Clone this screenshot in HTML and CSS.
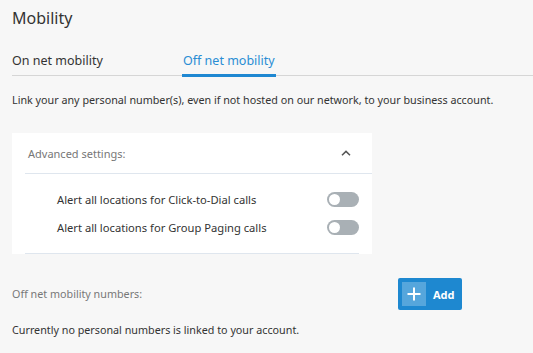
FILE: index.html
```html
<!DOCTYPE html>
<html lang="en">
<head>
    <meta charset="UTF-8">
    <meta name="viewport" content="width=device-width, initial-scale=1.0">
    <title>Mobility</title>
    <link rel="stylesheet" href="styles.css">
</head>
<body>
    <div class="page">
        <h1>Mobility</h1>

        <!-- Tabs -->
        <div class="tabs">
            <div class="tab">On net mobility</div>
            <div class="tab active">Off net mobility</div>
        </div>

        <p class="intro">Link your any personal number(s), even if not hosted on our network, to your business account.</p>

        <!-- Advanced settings card -->
        <div class="settings-card">
            <div class="card-header">
                <span>Advanced settings:</span>
                <svg class="chevron" width="10" height="6" viewBox="0 0 10 6">
                    <path d="M1 5.2 L5 1.4 L9 5.2" fill="none" stroke="#555" stroke-width="1.5"/>
                </svg>
            </div>
            <div class="card-rows">
                <div class="setting-row">
                    <span>Alert all locations for Click-to-Dial calls</span>
                    <span class="toggle"></span>
                </div>
                <div class="setting-row">
                    <span>Alert all locations for Group Paging calls</span>
                    <span class="toggle"></span>
                </div>
            </div>
        </div>

        <!-- Numbers -->
        <div class="numbers-head">
            <span class="label">Off net mobility numbers:</span>
            <button class="add-btn">
                <span class="plus">
                    <svg width="14" height="14" viewBox="0 0 14 14">
                        <path d="M7 0.5 V13.5 M0.5 7 H13.5" stroke="#fff" stroke-width="2"/>
                    </svg>
                </span>
                Add
            </button>
        </div>

        <p class="empty">Currently no personal numbers is linked to your account.</p>
    </div>
</body>
</html>
```

FILE: styles.css
```css
body {
    margin: 0;
    background-color: #f7f7f7;
    font-family: "Noto Sans", "Open Sans", sans-serif;
    color: #333;
}

.page {
    padding: 8px 0 0 12px;
}

h1 {
    margin: 0;
    font-size: 16px;
    font-weight: normal;
    line-height: 20px;
    color: #333;
}

.tabs {
    display: flex;
    margin-top: 25px;
    border-bottom: 1px solid #d6d6d6;
}

.tab {
    font-size: 12.5px;
    line-height: 16px;
    padding-bottom: 5px;
    border-bottom: 3px solid transparent;
    margin-bottom: -2px;
}

.tab:first-child {
    width: 170px;
}

.tab.active {
    color: #2a8dd4;
    border-bottom-color: #1f88d2;
    padding: 0 1px 5px 1px;
}

.intro {
    margin: 16px 0 0 0;
    font-size: 10.75px;
    line-height: 16px;
}

.settings-card {
    width: 360px;
    margin-top: 25px;
    background-color: #fff;
}

.card-header {
    display: flex;
    justify-content: space-between;
    align-items: center;
    height: 40px;
    padding: 0 21px 0 3px;
    margin-left: 13px;
    border-bottom: 1px solid #dfe6ee;
    font-size: 11px;
    color: #777;
}

.card-rows {
    margin: 0 13px;
    padding: 11px 0 12px 0;
    border-bottom: 1px solid #dfe6ee;
}

.setting-row {
    display: flex;
    justify-content: space-between;
    align-items: center;
    height: 28px;
    padding-left: 32px;
    font-size: 11.2px;
}

.toggle {
    position: relative;
    width: 32px;
    height: 15px;
    border-radius: 8px;
    background-color: #a9b0b5;
}

/* knob */
.toggle::after {
    content: "";
    position: absolute;
    left: 2px;
    top: 2px;
    width: 11px;
    height: 11px;
    border-radius: 50%;
    background-color: #fff;
}

.numbers-head {
    display: flex;
    justify-content: space-between;
    align-items: center;
    width: 450px;
    margin-top: 24px;
}

.label {
    font-size: 10.75px;
    color: #777;
}

.add-btn {
    display: flex;
    align-items: center;
    gap: 7px;
    width: 64px;
    height: 32px;
    padding: 0 4px;
    border: none;
    border-radius: 2px;
    background-color: #1e88d0;
    color: #fff;
    font-family: inherit;
    font-size: 11px;
    font-weight: bold;
}

.plus {
    display: flex;
    align-items: center;
    justify-content: center;
    width: 24px;
    height: 24px;
    background-color: rgba(255, 255, 255, 0.25);
}

.empty {
    margin: 12px 0 0 0;
    font-size: 10.75px;
    line-height: 16px;
}
```
